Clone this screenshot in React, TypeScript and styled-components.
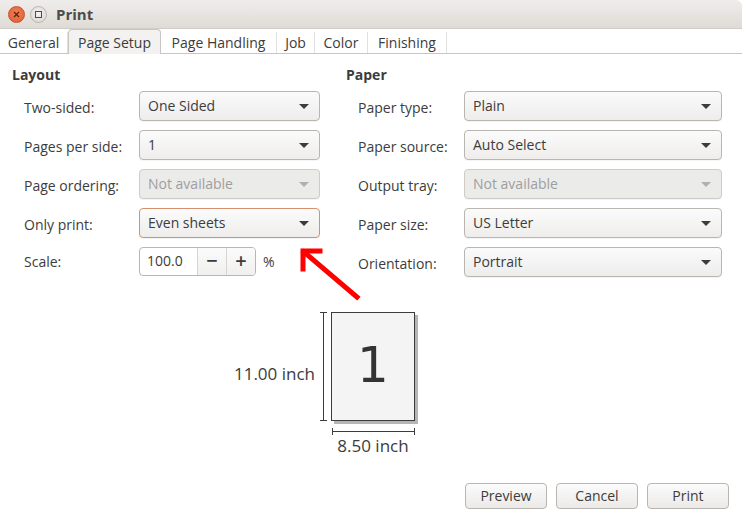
import React from "react";
import styled, { createGlobalStyle } from "styled-components";

const Global = createGlobalStyle`
  html, body { margin: 0; padding: 0; background: #ffffff; }
  body { font-family: "Open Sans", "Noto Sans", sans-serif; font-size: 14px; color: #3c3c3c; }
  * { box-sizing: border-box; }
`;

const Window = styled.div`
  position: relative;
  width: 742px;
  height: 521px;
  background: #ffffff;
  overflow: hidden;
`;

const TitleBar = styled.div`
  height: 29px;
  display: flex;
  align-items: center;
  padding-left: 8px;
  gap: 3px;
  background: linear-gradient(#efedeb, #dfdbd6);
  border-top-right-radius: 6px;
  border-bottom: 1px solid #cfcbc6;
`;

const CircleBtn = styled.div<{ $close?: boolean }>`
  width: 17px;
  height: 17px;
  border-radius: 50%;
  display: flex;
  align-items: center;
  justify-content: center;
  background: ${(p) =>
    p.$close
      ? "radial-gradient(circle at 50% 40%, #f57e55, #e05a2c)"
      : "radial-gradient(circle at 50% 40%, #f4f3f1, #d6d3cf)"};
  border: 1px solid ${(p) => (p.$close ? "#c4532d" : "#bab6b0")};
  margin-right: 2px;
`;

const Title = styled.div`
  font-weight: 700;
  font-size: 15px;
  color: #4c4c4c;
  margin-left: 4px;
`;

const Tabs = styled.div`
  display: flex;
  height: 25px;
  border-bottom: 1px solid #c9c6c2;
  background: #ffffff;
`;

const Tab = styled.div<{ $active?: boolean; $w: number }>`
  width: ${(p) => p.$w}px;
  display: flex;
  align-items: center;
  justify-content: center;
  font-size: 14px;
  color: #3c3c3c;
  border-right: 1px solid ${(p) => (p.$active ? "#c9c6c2" : "#e2e0dd")};
  ${(p) =>
    p.$active
      ? `background: #f3f2f0; border-left: 1px solid #c9c6c2; border-top: 1px solid #c9c6c2; border-top-left-radius: 4px; border-top-right-radius: 4px; margin-top: 0px; margin-bottom: -1px;`
      : `margin-top: 3px;`}
`;

const Columns = styled.div`
  display: flex;
  padding: 13px 0 0 12px;
  gap: 26px;
`;

const Section = styled.div<{ $w: number }>`
  width: ${(p) => p.$w}px;
`;

const Heading = styled.div`
  font-weight: 700;
  font-size: 14px;
  color: #3c3c3c;
  height: 16px;
  line-height: 16px;
  margin-bottom: 8px;
`;

const FormGrid = styled.div<{ $label: number }>`
  display: grid;
  grid-template-columns: ${(p) => p.$label}px 1fr;
  row-gap: 9px;
  padding-left: 12px;
  align-items: center;
`;

const Label = styled.div<{ $tight?: boolean }>`
  font-size: 14px;
  color: #3c3c3c;
  padding-top: ${(p) => (p.$tight ? 0 : 3)}px;
`;

const Combo = styled.div<{ $disabled?: boolean; $focus?: boolean }>`
  height: 30px;
  border-radius: 4px;
  border: 1px solid ${(p) => (p.$focus ? "#d5906e" : p.$disabled ? "#cfccc8" : "#b9b5b0")};
  background: ${(p) => (p.$disabled ? "#ebebea" : "linear-gradient(#fbfbfb, #eeedec)")};
  display: flex;
  align-items: center;
  justify-content: space-between;
  padding: 0 10px 2px 8px;
  color: ${(p) => (p.$disabled ? "#9e9e9e" : "#3c3c3c")};
  font-size: 14px;
  box-shadow: 0 1px 0 rgba(0,0,0,0.04);
`;

const Caret = styled.div<{ $disabled?: boolean }>`
  width: 0;
  height: 0;
  border-left: 5px solid transparent;
  border-right: 5px solid transparent;
  border-top: 5px solid ${(p) => (p.$disabled ? "#b0b0b0" : "#3c3c3c")};
  margin-top: 2px;
`;

const SpinRow = styled.div`
  display: flex;
  align-items: center;
  gap: 7px;
`;

const Spin = styled.div`
  width: 117px;
  height: 29px;
  border: 1px solid #b9b5b0;
  border-radius: 4px;
  display: flex;
  background: #ffffff;
  overflow: hidden;
`;

const SpinValue = styled.div`
  flex: 1;
  display: flex;
  align-items: center;
  padding: 0 0 2px 7px;
  font-size: 14px;
`;

const SpinBtn = styled.div`
  width: 29px;
  display: flex;
  align-items: center;
  justify-content: center;
  border-left: 1px solid #d8d5d1;
  font-size: 20px;
  font-weight: 600;
  color: #3c3c3c;
  background: linear-gradient(#fbfbfb, #f1f0ef);
  padding-bottom: 2px;
`;

const Percent = styled.div`
  font-size: 14px;
`;

const PreviewGrid = styled.div`
  display: grid;
  grid-template-columns: 315px 16px 84px;
  grid-template-rows: 109px 36px;
  margin-top: 35px;
`;

const HeightLabel = styled.div`
  display: flex;
  align-items: center;
  justify-content: flex-end;
  font-size: 17px;
  color: #3c3c3c;
  padding-top: 14px;
`;

const VDim = styled.div`
  position: relative;
  margin: 0 8px 0 8px;
  border-left: 1px solid #3c3c3c;
  &::before, &::after {
    content: "";
    position: absolute;
    left: -4px;
    width: 7px;
    border-top: 1px solid #3c3c3c;
  }
  &::before { top: 0; }
  &::after { bottom: 0; }
`;

const Page = styled.div`
  width: 84px;
  height: 109px;
  border: 1px solid #3c3c3c;
  background: #f4f4f4;
  box-shadow: 3px 3px 0 #b5b5b5;
  display: flex;
  align-items: center;
  justify-content: center;
  font-size: 50px;
  font-family: "DejaVu Sans", sans-serif;
  color: #333333;
  padding-bottom: 4px;
`;

const Empty = styled.div``;

const WidthBox = styled.div`
  display: flex;
  flex-direction: column;
  align-items: center;
  padding-top: 10px;
`;

const HDim = styled.div`
  position: relative;
  width: 83px;
  border-top: 1px solid #3c3c3c;
  &::before, &::after {
    content: "";
    position: absolute;
    top: -4px;
    height: 7px;
    border-left: 1px solid #3c3c3c;
  }
  &::before { left: 0; }
  &::after { right: 0; }
`;

const WidthLabel = styled.div`
  font-size: 17px;
  margin-top: 2px;
  white-space: nowrap;
`;

const ButtonRow = styled.div`
  position: absolute;
  right: 13px;
  bottom: 12px;
  display: flex;
  gap: 9px;
`;

const Button = styled.div`
  width: 82px;
  height: 26px;
  border: 1px solid #b9b5b0;
  border-radius: 4px;
  background: linear-gradient(#fbfbfb, #eceae8);
  display: flex;
  align-items: center;
  justify-content: center;
  font-size: 14px;
  color: #3c3c3c;
  padding-bottom: 2px;
`;

const Arrow = styled.svg`
  position: absolute;
  left: 295px;
  top: 243px;
`;

const tabs: [string, number][] = [
  ["General", 68],
  ["Page Setup", 93],
  ["Page Handling", 116],
  ["Job", 38],
  ["Color", 53],
  ["Finishing", 79],
];

export default function App() {
  return (
    <Window>
      <Global />
      <TitleBar>
        <CircleBtn $close>
          <svg width="7" height="7" viewBox="0 0 7 7">
            <path d="M1 1L6 6M6 1L1 6" stroke="#5a2412" strokeWidth="1.3" />
          </svg>
        </CircleBtn>
        <CircleBtn>
          <svg width="7" height="7" viewBox="0 0 7 7">
            <rect x="0.5" y="0.5" width="6" height="6" fill="none" stroke="#4c4c4c" strokeWidth="1" />
          </svg>
        </CircleBtn>
        <Title>Print</Title>
      </TitleBar>
      <Tabs>
        {tabs.map(([t, w]) => (
          <Tab key={t} $w={w} $active={t === "Page Setup"}>
            {t}
          </Tab>
        ))}
      </Tabs>
      <Columns>
        <Section $w={308}>
          <Heading>Layout</Heading>
          <FormGrid $label={115}>
            <Label>Two-sided:</Label>
            <Combo>One Sided<Caret /></Combo>
            <Label>Pages per side:</Label>
            <Combo>1<Caret /></Combo>
            <Label>Page ordering:</Label>
            <Combo $disabled>Not available<Caret $disabled /></Combo>
            <Label>Only print:</Label>
            <Combo $focus>Even sheets<Caret /></Combo>
            <Label $tight>Scale:</Label>
            <SpinRow>
              <Spin>
                <SpinValue>100.0</SpinValue>
                <SpinBtn>−</SpinBtn>
                <SpinBtn>+</SpinBtn>
              </Spin>
              <Percent>%</Percent>
            </SpinRow>
          </FormGrid>
        </Section>
        <Section $w={376}>
          <Heading>Paper</Heading>
          <FormGrid $label={106}>
            <Label>Paper type:</Label>
            <Combo>Plain<Caret /></Combo>
            <Label>Paper source:</Label>
            <Combo>Auto Select<Caret /></Combo>
            <Label>Output tray:</Label>
            <Combo $disabled>Not available<Caret $disabled /></Combo>
            <Label>Paper size:</Label>
            <Combo>US Letter<Caret /></Combo>
            <Label>Orientation:</Label>
            <Combo>Portrait<Caret /></Combo>
          </FormGrid>
        </Section>
      </Columns>
      <PreviewGrid>
        <HeightLabel>11.00 inch</HeightLabel>
        <VDim />
        <Page>1</Page>
        <Empty />
        <Empty />
        <WidthBox>
          <HDim />
          <WidthLabel>8.50 inch</WidthLabel>
        </WidthBox>
      </PreviewGrid>
      <ButtonRow>
        <Button>Preview</Button>
        <Button>Cancel</Button>
        <Button>Print</Button>
      </ButtonRow>
      <Arrow width="70" height="62" viewBox="0 0 70 62">
        <path d="M62 54L9 9" stroke="#ff0000" strokeWidth="5" strokeLinecap="square" fill="none" />
        <path d="M8 26L8 8L25 8" stroke="#ff0000" strokeWidth="5" strokeLinecap="square" fill="none" />
      </Arrow>
    </Window>
  );
}
